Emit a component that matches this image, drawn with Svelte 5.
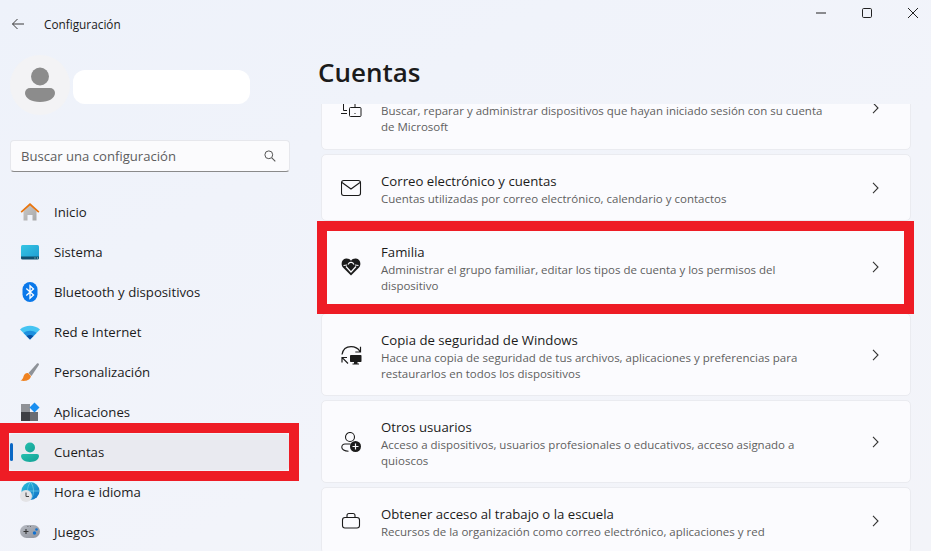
<script>
  const cards = [
    { cls: 'h84', title: '\u00a0', sub: 'Buscar, reparar y administrar dispositivos que hayan iniciado sesión con su cuenta de Microsoft', icon: 'find' },
    { cls: 'h67', title: 'Correo electrónico y cuentas', sub: 'Cuentas utilizadas por correo electrónico, calendario y contactos', icon: 'mail' },
    { cls: 'h84', title: 'Familia', sub: 'Administrar el grupo familiar, editar los tipos de cuenta y los permisos del dispositivo', icon: 'heart' },
    { cls: 'h83', title: 'Copia de seguridad de Windows', sub: 'Hace una copia de seguridad de tus archivos, aplicaciones y preferencias para restaurarlos en todos los dispositivos', icon: 'backup' },
    { cls: 'h83', title: 'Otros usuarios', sub: 'Acceso a dispositivos, usuarios profesionales o educativos, acceso asignado a quioscos', icon: 'users' },
    { cls: 'h67', title: 'Obtener acceso al trabajo o la escuela', sub: 'Recursos de la organización como correo electrónico, aplicaciones y red', icon: 'work' }
  ];
  const nav = ['Inicio', 'Sistema', 'Bluetooth y dispositivos', 'Red e Internet', 'Personalización', 'Aplicaciones', 'Cuentas', 'Hora e idioma', 'Juegos'];
</script>

<div class="window">
  <aside class="side">
    <div class="bar">
      <svg class="back" width="14" height="12" viewBox="0 0 14 12"><path d="M13 6H1.500M6.500 1 1.500 6l5 5" fill="none" stroke="#3a3a3a" stroke-width="1"/></svg>
      <span>Configuración</span>
    </div>
    <div class="user">
      <div class="avatar">
        <svg width="30" height="36" viewBox="0 0 30 36"><circle cx="15" cy="9.500" r="9" fill="#8c8c8c"/><path d="M5 21h20a5 5 0 0 1 5 5c0 5-6 9-15 9S0 31 0 26a5 5 0 0 1 5-5z" fill="#8c8c8c"/></svg>
      </div>
      <div class="name"></div>
    </div>
    <div class="search">
      <span>Buscar una configuración</span>
      <svg width="12" height="12" viewBox="0 0 12 12"><circle cx="4.800" cy="4.800" r="3.900" fill="none" stroke="#555" stroke-width="1"/><path d="M7.800 7.800 11.300 11.300" stroke="#555" stroke-width="1.100"/></svg>
    </div>
    <nav>
      {#each nav as item, i}
        <div class="item" class:active={i === 6}>
          {#if i === 6}<i class="pill"></i>{/if}
          <svg class="nicon" width="20" height="20" viewBox="0 0 20 20">
            <defs>
              <linearGradient id="g{i}" x1="0" y1="0" x2="1" y2="1">
                {#if i === 0}<stop offset="0" stop-color="#c9c9c9"/><stop offset="1" stop-color="#a8a8a8"/>
                {:else if i === 1}<stop offset="0" stop-color="#35c6e4"/><stop offset="1" stop-color="#1f9cd2"/>
                {:else if i === 6}<stop offset="0" stop-color="#27bfae"/><stop offset="1" stop-color="#12a195"/>
                {:else if i === 7}<stop offset="0" stop-color="#2cc0dc"/><stop offset="1" stop-color="#0f6cc4"/>
                {:else}<stop offset="0" stop-color="#b6bac2"/><stop offset="1" stop-color="#8f939c"/>{/if}
              </linearGradient>
            </defs>
            {#if i === 0}
              <path d="M3.500 9 10 3l6.500 6v9.500H12.500V13h-5v5.500h-4z" fill="url(#g0)"/>
              <path d="M.6 9.500 10 1l9.400 8.500-1.100 1.300L10 3.400 1.700 10.800z" fill="#e8750f"/>
            {:else if i === 1}
              <rect x="1" y="3" width="18" height="14" rx="1.500" fill="url(#g1)"/>
              <path d="M1 14.500h18V16a1.500 1.500 0 0 1-1.500 1.500h-15A1.500 1.500 0 0 1 1 16z" fill="#11506f"/>
              <path d="M14.500 16h1M17 16h1" stroke="#cfe" stroke-width=".8"/>
            {:else if i === 2}
              <rect x="2.500" y="0" width="15" height="20" rx="7.500" fill="#0a78ea"/>
              <path d="M6.300 6.500 13.500 13 10 16.200V3.800L13.500 7 6.300 13.500" fill="none" stroke="#fff" stroke-width="1.300"/>
            {:else if i === 3}
              <path d="M0 7.500C5.500 2.500 14.500 2.500 20 7.500L10 17.500z" fill="#45c4f2"/>
              <path d="M3.500 11C7 8 13 8 16.500 11L10 17.500z" fill="#1e90de"/>
              <path d="M6.500 14C8.500 12.500 11.500 12.500 13.500 14L10 17.500z" fill="#0a4fa0"/>
            {:else if i === 4}
              <path d="M8.500 11 17 1.500c1-.8 2.500.3 1.800 1.500L11.500 14z" fill="#8e9298"/>
              <path d="M8 11c-2.500-.2-4 1.500-4.500 3.500C3 16.500 2 18 .5 18.500c4 1 9.500.5 10.500-4.500z" fill="#ef8220"/>
            {:else if i === 5}
              <rect x="1" y="2" width="9" height="9" fill="#8f9196"/>
              <rect x="1" y="10" width="9" height="9" fill="#3e3f44"/>
              <rect x="10" y="10" width="8" height="9" fill="#6b6d73"/>
              <path d="M14.500 .5 19.500 5.500 14.500 10.500 9.500 5.500z" fill="#1a8ff0"/>
            {:else if i === 6}
              <circle cx="10" cy="5.500" r="5" fill="url(#g6)"/>
              <path d="M3 12h14a2 2 0 0 1 2 2c0 3-3.500 6-9 6s-9-3-9-6a2 2 0 0 1 2-2z" fill="url(#g6)"/>
            {:else if i === 7}
              <circle cx="10.500" cy="9" r="9" fill="url(#g7)"/>
              <path d="M1.500 9h18M10.500 0c-4 5-4 13 0 18M10.500 0c4 5 4 13 0 18" stroke="#7fd8ee" stroke-width=".6" fill="none"/>
              <circle cx="6" cy="14" r="6" fill="#e4e4e6"/>
              <path d="M6 10.500V14.500H9" stroke="#444" stroke-width="1" fill="none"/>
            {:else}
              <rect x="0" y="3" width="20" height="13" rx="6.500" fill="url(#g8)"/>
              <path d="M3.500 9.500h5M6 7v5" stroke="#333" stroke-width="1.100"/>
              <circle cx="14.500" cy="11" r="1.700" fill="#1171d0"/>
              <circle cx="16.500" cy="7.500" r="1.300" fill="#1171d0"/>
              <path d="M7.500 4.500h.8M10 4.500h.8" stroke="#444" stroke-width=".8"/>
            {/if}
          </svg>
          <span>{item}</span>
        </div>
      {/each}
    </nav>
  </aside>

  <main class="main">
    <div class="caption">
      <svg width="10" height="2" viewBox="0 0 10 2"><path d="M0 1h10" stroke="#222" stroke-width="1"/></svg>
      <svg width="10" height="10" viewBox="0 0 10 10"><rect x=".5" y=".5" width="9" height="9" rx="1.200" fill="none" stroke="#222"/></svg>
      <svg width="10" height="10" viewBox="0 0 10 10"><path d="M0 0 10 10M10 0 0 10" stroke="#222" stroke-width="1"/></svg>
    </div>
    <h1>Cuentas</h1>
    <div class="scroll">
      <div class="list">
        {#each cards as c}
          <div class="card {c.cls}">
            <svg class="cicon" width="21" height="20" viewBox="0 0 21 20">
              {#if c.icon === 'find'}
                <path d="M2.500 6v6.500H6M0 15.500h6" fill="none" stroke="#1b1b1b"/>
                <rect x="8.500" y="9.500" width="11.500" height="9" rx="1" fill="none" stroke="#1b1b1b"/>
                <path d="M14 6v3.500M13.500 15.500h1" stroke="#1b1b1b"/>
              {:else if c.icon === 'mail'}
                <rect x=".5" y="2.500" width="19" height="15" rx="2.200" fill="none" stroke="#1b1b1b" stroke-width="1.100"/>
                <path d="M1 4.500 10 11l9-6.500" fill="none" stroke="#1b1b1b" stroke-width="1.100"/>
              {:else if c.icon === 'heart'}
                <path d="M10 18.500 2 10.500C-.8 7 .9 2 5 1.500c2.200-.2 3.900.6 5 2.300 1.100-1.700 2.800-2.500 5-2.300 4.100.5 5.800 5.500 3 9z" fill="#1b1b1b"/>
                <path d="M2.500 8.500 6 8M17.500 8.500 14 8M5 9.500l5 5.500 5-5.500M7 7.500C8 5.500 9 5 10 5.500 11 5 12 5.500 13 7.500" fill="none" stroke="#fbfbfe" stroke-width="1.200"/>
                <path d="M10 7 7.500 9.800 10 12.500 12.500 9.800z" fill="#1b1b1b"/>
              {:else if c.icon === 'backup'}
                <path d="M1 8.500C2 3 6 .7 10 .7s7 1.500 9 4.800M19.500 .8V6H14.300M7 17.500 1.200 11.700M1 16.500V11.500H6" fill="none" stroke="#1b1b1b" stroke-width="1.200" transform="translate(0 1)"/>
                <rect x="9" y="10" width="11.500" height="7" rx=".8" fill="#1b1b1b"/>
                <path d="M13 16.500h3.500v2h1.500v1h-6.500v-1H13z" fill="#1b1b1b"/>
              {:else if c.icon === 'users'}
                <circle cx="9" cy="5" r="4.500" fill="none" stroke="#1b1b1b" stroke-width="1.100"/>
                <path d="M9.500 12H4a3.200 3.200 0 0 0-3.200 3.200c0 2 2.500 4 6.700 4" fill="none" stroke="#1b1b1b" stroke-width="1.100"/>
                <circle cx="14.500" cy="14.500" r="5.500" fill="#1b1b1b"/>
                <path d="M14.500 11.500v6M11.500 14.500h6" stroke="#fbfbfe" stroke-width="1.200"/>
              {:else if c.icon === 'work'}
                <rect x="1.500" y="6.500" width="17" height="10.500" rx="2.500" fill="none" stroke="#1b1b1b" stroke-width="1.100"/>
                <path d="M6 6.500V4.500A2 2 0 0 1 8 2.500h4a2 2 0 0 1 2 2v2" fill="none" stroke="#1b1b1b" stroke-width="1.100"/>
              {/if}
            </svg>
            <div class="text">
              <div class="title">{c.title}</div>
              <div class="sub">{c.sub}</div>
            </div>
            <svg class="chev" width="7" height="12" viewBox="0 0 7 12"><path d="M1 .8 6 6 1 11.200" fill="none" stroke="#333" stroke-width="1.100"/></svg>
          </div>
        {/each}
      </div>
    </div>
  </main>

  <div class="mark mark-a"></div>
  <div class="mark mark-b"></div>
</div>

<style>
  :global(body) { margin: 0; }
  .window {
    position: relative;
    width: 931px;
    height: 551px;
    overflow: hidden;
    display: flex;
    font-family: "Open Sans", "Noto Sans", sans-serif;
    color: #1b1b1b;
    background: linear-gradient(150deg, #eef2fa 0%, #f2f4fa 60%, #f3f4f9 100%);
  }
  .side { width: 300px; flex: none; }
  .bar { height: 47px; display: flex; align-items: center; padding-left: 11px; font-size: 11.800px; }
  .back { margin-right: 19px; }
  .user { height: 60px; margin-top: 8px; padding-left: 10px; display: flex; align-items: center; gap: 3px; }
  .avatar { width: 60px; height: 60px; border-radius: 50%; background: #f3f3f5; display: flex; align-items: center; justify-content: center; }
  .name { width: 177px; height: 34px; margin-top: 4px; border-radius: 12px; background: #fff; }
  .search {
    margin: 25px 0 0 10px; width: 280px; height: 32px; box-sizing: border-box;
    display: flex; align-items: center; justify-content: space-between;
    padding: 0 13px 0 10px; background: #fbfbfd; border: 1px solid #e6e7ec; border-bottom-color: #8a8a8a; border-radius: 4px;
    font-size: 13.100px; color: #5d5d5d;
  }
  nav { margin-top: 22px; display: flex; flex-direction: column; gap: 4px; }
  .item { position: relative; height: 36px; margin: 0 11px 0 9px; display: flex; align-items: center; padding-left: 11px; font-size: 13.200px; border-radius: 4px; }
  .active { background: #e9eaf0; }
  .pill { position: absolute; left: 1px; top: 9px; width: 3px; height: 18px; border-radius: 2px; background: #0a67c4; }
  .nicon { margin-right: 14px; flex: none; }
  .main { flex: 1; min-width: 0; position: relative; display: flex; flex-direction: column; }
  .caption { position: absolute; right: 13px; top: 8px; display: flex; align-items: center; gap: 36px; }
  h1 { margin: 51px 0 0 18px; height: 53px; line-height: 42px; font-size: 26px; font-weight: 600; color: #1b1b1b; }
  .scroll { flex: 1; overflow: hidden; min-height: 0; }
  .list { margin: -38px 0 0 21px; width: 590px; display: flex; flex-direction: column; gap: 4px; }
  .card { box-sizing: border-box; display: flex; align-items: center; padding: 0 31px 0 19px; background: #fbfbfe; border: 1px solid #eaebf0; border-radius: 5px; flex: none; }
  .h84 { height: 84px; }
  .h83 { height: 83px; }
  .h67 { height: 67px; }
  .cicon { flex: none; margin-right: 19px; }
  .text { width: 450px; padding-top: 2px; margin-right: auto; }
  .title { font-size: 13.200px; line-height: 20px; }
  .sub { font-size: 11.500px; line-height: 16px; color: #5f5f5f; }
  .chev { flex: none; }
  .mark { position: absolute; border: 10px solid #ee1c25; box-sizing: border-box; pointer-events: none; }
  .mark-a { left: -1px; top: 423px; width: 300px; height: 58px; }
  .mark-b { left: 317px; top: 221px; width: 597px; height: 93px; }
</style>
